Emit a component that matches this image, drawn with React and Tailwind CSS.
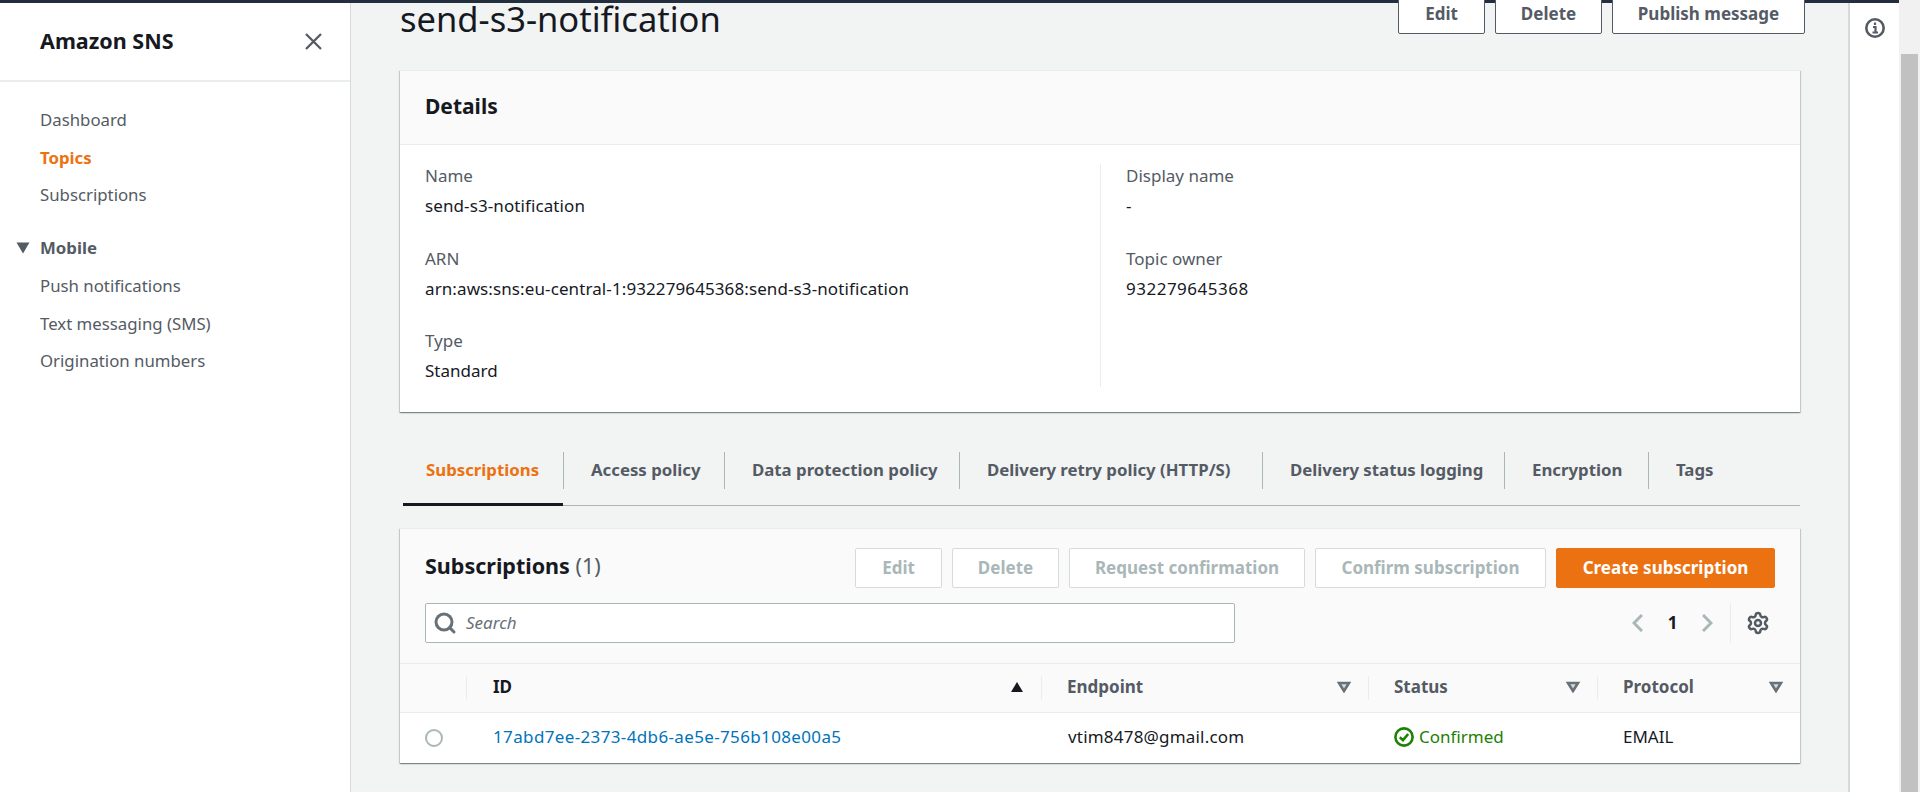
import React from "react";
import { Search, Settings } from "lucide-react";

const Button = ({ children, className = "" }) => (
  <button className={`h-[40px] rounded-[2px] border text-[17px] font-bold flex items-center justify-center ${className}`}>
    {children}
  </button>
);

const Tab = ({ children, active, last, width }) => (
  <div className={`h-full flex items-center ${width}`}>
    <div className={`h-[37px] w-full flex items-center pb-[2px] text-[16.8px] font-bold ${active ? "pl-[23px] text-[#ec7211]" : "pl-[27px] text-[#545b64]"} ${last ? "" : "border-r border-[#aab7b8]"}`}>
      {children}
    </div>
  </div>
);

const Field = ({ label, value, valueClass = "" }) => (
  <div className="h-[82.5px]">
    <div className="text-[17px] leading-[24px] text-[#545b64]">{label}</div>
    <div className={`mt-[6px] text-[17px] leading-[24px] text-[#16191f] ${valueClass}`}>{value}</div>
  </div>
);

const HeadCell = ({ label, sort, divider = true }) => (
  <div className="h-full flex items-center relative pl-[26px] pr-[17px] pb-[2px]">
    {divider && <div className="absolute left-0 top-[12px] h-[24px] w-px bg-[#eaeded]" />}
    <span className={`text-[17px] font-bold ${sort ? "pl-[1px] text-[#16191f]" : "text-[#545b64]"}`}>{label}</span>
    <svg className="ml-auto" width="14" height="12" viewBox="0 0 14 12">
      {sort ? (
        <path d="M7 1 L13 11 L1 11 Z" fill="#16191f" />
      ) : (
        <path d="M2 2 L12 2 L7 10 Z" fill="#d5dbdb" stroke="#687078" strokeWidth="2.6" />
      )}
    </svg>
  </div>
);

export default function App() {
  return (
    <div className="w-[1920px] h-[792px] overflow-hidden flex flex-col bg-[#f2f3f3] text-[#16191f] font-['Noto_Sans',sans-serif]">
      <div className="h-[3px] w-[1899px] shrink-0 bg-[#232f3e]" />
      <div className="flex-1 flex min-h-0">
        {/* Side nav */}
        <aside className="w-[351px] shrink-0 bg-white border-r border-[#d5dbdb]">
          <div className="h-[79px] border-b-2 border-[#eaeded] flex items-center justify-between pl-[40px] pr-[27px]">
            <span className="text-[21.5px] font-bold">Amazon SNS</span>
            <svg width="19" height="19" viewBox="0 0 19 19" stroke="#545b64" strokeWidth="2.3">
              <path d="M2 2 L17 17 M17 2 L2 17" />
            </svg>
          </div>
          <div className="pl-[40px] pt-[19px] text-[16.8px] text-[#545b64]">
            <div className="h-[37.5px] flex items-center">Dashboard</div>
            <div className="h-[37.5px] flex items-center font-bold text-[#ec7211]">Topics</div>
            <div className="h-[37.5px] flex items-center">Subscriptions</div>
            <div className="h-[37.5px] mt-[15px] mb-[1px] flex items-center relative font-bold">
              <svg className="absolute left-[-24px] top-[13px]" width="14" height="12" viewBox="0 0 14 12">
                <path d="M0.5 0.5 L13.5 0.5 L7 11.5 Z" fill="#545b64" />
              </svg>
              Mobile
            </div>
            <div className="h-[37.5px] flex items-center">Push notifications</div>
            <div className="h-[37.5px] flex items-center">Text messaging (SMS)</div>
            <div className="h-[37.5px] flex items-center">Origination numbers</div>
          </div>
        </aside>

        {/* Main content */}
        <main className="flex-1 min-w-0 pl-[49px] pr-[48px]">
          <div className="h-[67px] flex items-start justify-between -mr-[5px]">
            <h1 className="text-[34.5px] leading-[32px] font-normal text-[#16191f]">send-s3-notification</h1>
            <div className="flex gap-[10px] -mt-[9px]">
              <Button className="w-[87px] bg-white border-[#545b64] text-[#545b64]">Edit</Button>
              <Button className="w-[107px] bg-white border-[#545b64] text-[#545b64]">Delete</Button>
              <Button className="w-[193px] bg-white border-[#545b64] text-[#545b64]">Publish message</Button>
            </div>
          </div>

          <section className="bg-white h-[342px] border-t border-[#eaeded] shadow-[0_1px_1px_0_rgba(0,28,36,0.3),1px_1px_1px_0_rgba(0,28,36,0.15),-1px_1px_1px_0_rgba(0,28,36,0.15)]">
            <div className="h-[74px] bg-[#fafafa] border-b border-[#eaeded] flex items-center pl-[25px] pb-[2px] text-[21px] font-bold">
              Details
            </div>
            <div className="grid grid-cols-[701px_1fr] pt-[19px]">
              <div className="pl-[25px] h-[223px] border-r border-[#eaeded]">
                <Field label="Name" value="send-s3-notification" valueClass="tracking-[0.1px]" />
                <Field label="ARN" value="arn:aws:sns:eu-central-1:932279645368:send-s3-notification" valueClass="tracking-[0.1px]" />
                <Field label="Type" value="Standard" />
              </div>
              <div className="pl-[25px]">
                <Field label="Display name" value="-" />
                <Field label="Topic owner" value="932279645368" valueClass="tracking-[0.5px]" />
              </div>
            </div>
          </section>

          {/* Tabs */}
          <div className="mt-[33px] ml-[3px] h-[61px] pb-[9px] flex border-b border-[#aab7b8] relative">
            <div className="absolute left-0 bottom-[-1px] w-[160px] h-[3px] bg-[#16191f]" />
            <Tab active width="w-[161px]">Subscriptions</Tab>
            <Tab width="w-[161px]">Access policy</Tab>
            <Tab width="w-[235px]">Data protection policy</Tab>
            <Tab width="w-[303px]">Delivery retry policy (HTTP/S)</Tab>
            <Tab width="w-[242px]">Delivery status logging</Tab>
            <Tab width="w-[144px]">Encryption</Tab>
            <Tab last width="w-[100px]">Tags</Tab>
          </div>

          {/* Subscriptions table */}
          <section className="mt-[22px] h-[235px] bg-white border-t border-[#eaeded] shadow-[0_1px_1px_0_rgba(0,28,36,0.3),1px_1px_1px_0_rgba(0,28,36,0.15),-1px_1px_1px_0_rgba(0,28,36,0.15)]">
            <div className="bg-[#fafafa] h-[135px] pl-[25px] pr-[25px] pt-[19px] border-b border-[#eaeded]">
              <div className="flex items-center justify-between">
                <div className="text-[21.5px] font-bold pb-[3px]">
                  Subscriptions <span className="font-normal text-[#545b64]">(1)</span>
                </div>
                <div className="flex gap-[10px]">
                  <Button className="w-[87px] bg-white border-[#d5dbdb] text-[#aab7b8]">Edit</Button>
                  <Button className="w-[107px] bg-white border-[#d5dbdb] text-[#aab7b8]">Delete</Button>
                  <Button className="w-[236px] bg-white border-[#d5dbdb] text-[#aab7b8]">Request confirmation</Button>
                  <Button className="w-[231px] bg-white border-[#d5dbdb] text-[#aab7b8]">Confirm subscription</Button>
                  <Button className="w-[219px] bg-[#ec7211] border-[#ec7211] text-white">Create subscription</Button>
                </div>
              </div>
              <div className="mt-[15px] flex items-center">
                <div className="w-[810px] h-[40px] bg-white border border-[#aab7b8] rounded-[2px] flex items-center pl-[7px]">
                  <Search size={24} strokeWidth={3} className="text-[#687078]" />
                  <span className="ml-[9px] text-[17px] italic text-[#687078]">Search</span>
                </div>
                <div className="ml-auto flex items-center h-[40px]">
                  <svg width="11" height="18" viewBox="0 0 11 18" fill="none" stroke="#aab7b8" strokeWidth="3">
                    <path d="M10 1 L2 9 L10 17" />
                  </svg>
                  <span className="w-[59px] text-center text-[17px] font-bold text-[#16191f]">1</span>
                  <svg width="11" height="18" viewBox="0 0 11 18" fill="none" stroke="#aab7b8" strokeWidth="3">
                    <path d="M1 1 L9 9 L1 17" />
                  </svg>
                  <div className="ml-[17px] h-[40px] w-px bg-[#eaeded]" />
                  <Settings size={24} strokeWidth={2.5} className="ml-[15px] mr-[5px] text-[#545b64]" />
                </div>
              </div>
            </div>
            <div className="grid grid-cols-[66px_575px_327px_229px_1fr] h-[49px] bg-[#fafafa] border-b border-[#eaeded]">
              <div />
              <HeadCell label="ID" sort />
              <HeadCell label="Endpoint" />
              <HeadCell label="Status" />
              <HeadCell label="Protocol" />
            </div>
            <div className="grid grid-cols-[66px_575px_327px_229px_1fr] h-[50px] items-center text-[17px] pb-[2px]">
              <div className="pl-[25px] pt-[2px]">
                <div className="w-[18px] h-[18px] rounded-full border-2 border-[#aab7b8] bg-white" />
              </div>
              <div className="pl-[27px] text-[#0073bb] tracking-[0.36px]">17abd7ee-2373-4db6-ae5e-756b108e00a5</div>
              <div className="pl-[27px] tracking-[0.2px]">vtim8478@gmail.com</div>
              <div className="pl-[26px] flex items-center gap-[5px] text-[#1d8102]">
                <svg width="20" height="20" viewBox="0 0 20 20" fill="none" stroke="#1d8102" strokeWidth="2.6">
                  <circle cx="10" cy="10" r="8.6" />
                  <path d="M5.8 10.2 L9 13.2 L14.2 7" />
                </svg>
                Confirmed
              </div>
              <div className="pl-[26px]">EMAIL</div>
            </div>
          </section>
        </main>

        {/* Tools rail */}
        <div className="w-[51px] shrink-0 bg-white border-l-2 border-[#d5dbdb] flex justify-center pt-[15px]">
          <svg width="20" height="20" viewBox="0 0 20 20" fill="none" stroke="#545b64">
            <circle cx="10" cy="10" r="8.7" strokeWidth="2.6" />
            <path d="M10 4.5 L10 7 M8 9 L10.5 9 L10.5 14 M7.5 14.5 L13 14.5" strokeWidth="2.2" />
          </svg>
        </div>
        <div className="w-[21px] shrink-0 bg-[#f1f1f1] -mt-[3px] pt-[54px] pl-[2px] pr-[2px]">
          <div className="h-full bg-[#c1c1c1]" />
        </div>
      </div>
    </div>
  );
}
